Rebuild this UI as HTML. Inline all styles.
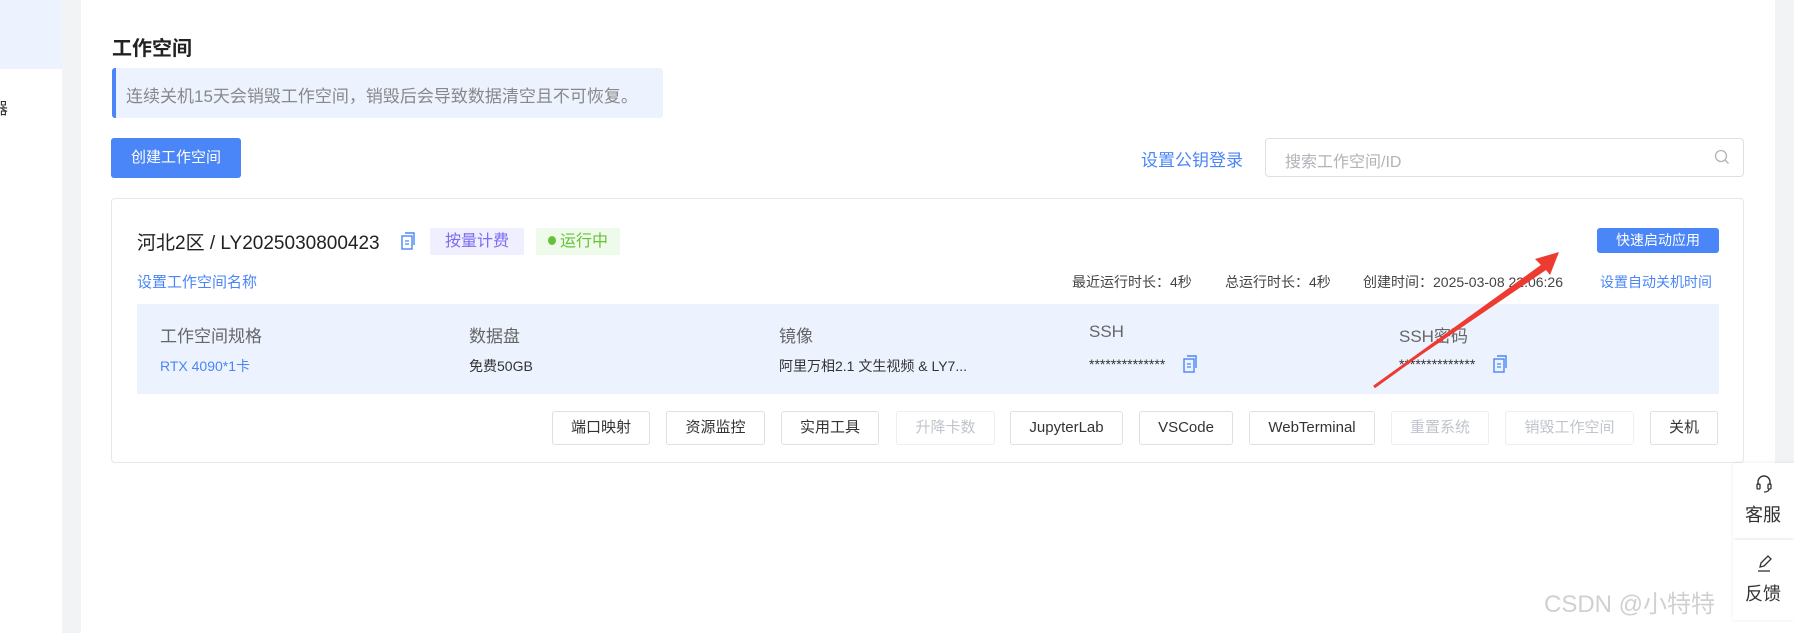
<!DOCTYPE html>
<html><head><meta charset="utf-8"><style>
*{margin:0;padding:0;box-sizing:border-box}
body{width:1794px;height:633px;overflow:hidden;background:#fff;font-family:"Liberation Sans","Noto Sans CJK SC",sans-serif;color:#333;position:relative}
.a{position:absolute;white-space:nowrap}
.btn{position:absolute;top:411px;height:34px;border:1px solid #dcdfe6;border-radius:3px;font-size:15px;line-height:32px;text-align:center;color:#333;background:#fff}
.dis{color:#c0c4cc;border-color:#ebeef5}
.lbl{position:absolute;top:322px;font-size:17px;color:#666}
.val{position:absolute;top:356px;font-size:14px;color:#333}
</style></head><body>
<div class="a" style="left:0;top:0;width:62px;height:633px;background:#fff"></div>
<div class="a" style="left:0;top:0;width:62px;height:69px;background:#edf3fe"></div>
<div class="a" style="left:-8px;top:95px;font-size:16px;color:#333">器</div>
<div class="a" style="left:62px;top:0;width:19px;height:633px;background:#f2f3f5"></div>
<div class="a" style="left:1775px;top:0;width:19px;height:463px;background:#f2f3f5"></div>

<div class="a" style="left:112px;top:32px;font-size:20px;font-weight:bold;color:#222">工作空间</div>
<div class="a" style="left:112px;top:68px;width:551px;height:50px;background:#edf3fe;border-left:4px solid #4a86f7;border-radius:3px"></div>
<div class="a" style="left:126px;top:82px;font-size:17px;color:#888">连续关机15天会销毁工作空间，销毁后会导致数据清空且不可恢复。</div>
<div class="a" style="left:111px;top:138px;width:130px;height:40px;background:#4a86f7;border-radius:3px;color:#fff;font-size:15px;line-height:40px;text-align:center">创建工作空间</div>

<div class="a" style="left:1141px;top:146px;font-size:17px;color:#4a86f7">设置公钥登录</div>
<div class="a" style="left:1265px;top:138px;width:479px;height:39px;border:1px solid #dcdfe6;border-radius:4px"></div>
<div class="a" style="left:1285px;top:148px;font-size:16px;color:#b0b3b8">搜索工作空间/ID</div>
<svg class="a" style="left:1714px;top:149px" width="16" height="16" viewBox="0 0 16 16"><circle cx="7" cy="7" r="5.5" fill="none" stroke="#b0b3b8" stroke-width="1.3"/><path d="M11 11l3.5 3.5" stroke="#b0b3b8" stroke-width="1.3"/></svg>

<div class="a" style="left:111px;top:198px;width:1633px;height:265px;border:1px solid #e4e7ed;border-radius:4px"></div>
<div class="a" style="left:137px;top:228px;font-size:19px;color:#222">河北2区 / LY2025030800423</div>
<svg class="a" style="left:400px;top:232px" width="17" height="18" viewBox="0 0 17 18"><rect x="2" y="4" width="10" height="13" fill="none" stroke="#4a86f7" stroke-width="1.4"/><path d="M5 1h9v12" fill="none" stroke="#4a86f7" stroke-width="1.4"/><path d="M5 9h4M5 12h4" stroke="#4a86f7" stroke-width="1.3"/></svg>
<div class="a" style="left:430px;top:228px;width:94px;height:27px;background:#efefff;border-radius:2px;color:#7b6cf0;font-size:16px;line-height:27px;text-align:center">按量计费</div>
<div class="a" style="left:536px;top:228px;width:84px;height:27px;background:#eefaea;border-radius:2px;color:#67c23a;font-size:16px;line-height:27px;text-align:center"><span style="display:inline-block;width:8px;height:9px;border-radius:50%;background:#67c23a;margin-right:4px;vertical-align:1px"></span>运行中</div>
<div class="a" style="left:137px;top:271px;font-size:15px;color:#4a86f7">设置工作空间名称</div>

<div class="a" style="left:1597px;top:228px;width:122px;height:25px;background:#4a86f7;border-radius:3px;color:#fff;font-size:14px;line-height:25px;text-align:center">快速启动应用</div>
<div class="a" style="left:1072px;top:272px;font-size:14px;color:#444">最近运行时长：4秒</div>
<div class="a" style="left:1225px;top:272px;font-size:14px;color:#444">总运行时长：4秒</div>
<div class="a" style="left:1363px;top:272px;font-size:14px;color:#444">创建时间：2025-03-08 22:06:26</div>
<div class="a" style="left:1600px;top:272px;font-size:14px;color:#4a86f7">设置自动关机时间</div>

<div class="a" style="left:137px;top:304px;width:1582px;height:90px;background:#edf3fe"></div>
<div class="lbl" style="left:160px">工作空间规格</div>
<div class="lbl" style="left:469px">数据盘</div>
<div class="lbl" style="left:779px">镜像</div>
<div class="lbl" style="left:1089px">SSH</div>
<div class="lbl" style="left:1399px">SSH密码</div>
<div class="val" style="left:160px;color:#4a86f7">RTX 4090*1卡</div>
<div class="val" style="left:469px">免费50GB</div>
<div class="val" style="left:779px">阿里万相2.1 文生视频 &amp; LY7...</div>
<div class="val" style="left:1089px">**************</div>
<div class="val" style="left:1399px">**************</div>
<svg class="a" style="left:1183px;top:355px" width="15" height="18" viewBox="0 0 15 18"><rect x="1" y="4" width="10" height="13" fill="none" stroke="#4a86f7" stroke-width="1.4"/><path d="M4 1h9v12" fill="none" stroke="#4a86f7" stroke-width="1.4"/><path d="M4 9h4M4 12h4" stroke="#4a86f7" stroke-width="1.3"/></svg>
<svg class="a" style="left:1493px;top:355px" width="15" height="18" viewBox="0 0 15 18"><rect x="1" y="4" width="10" height="13" fill="none" stroke="#4a86f7" stroke-width="1.4"/><path d="M4 1h9v12" fill="none" stroke="#4a86f7" stroke-width="1.4"/><path d="M4 9h4M4 12h4" stroke="#4a86f7" stroke-width="1.3"/></svg>

<div class="btn" style="left:552px;width:98px">端口映射</div>
<div class="btn" style="left:666px;width:99px">资源监控</div>
<div class="btn" style="left:781px;width:98px">实用工具</div>
<div class="btn dis" style="left:896px;width:99px">升降卡数</div>
<div class="btn" style="left:1010px;width:113px">JupyterLab</div>
<div class="btn" style="left:1139px;width:94px">VSCode</div>
<div class="btn" style="left:1249px;width:126px">WebTerminal</div>
<div class="btn dis" style="left:1391px;width:98px">重置系统</div>
<div class="btn dis" style="left:1505px;width:129px">销毁工作空间</div>
<div class="btn" style="left:1650px;width:68px">关机</div>

<div class="a" style="left:1733px;top:463px;width:61px;height:75px;background:#fff;box-shadow:0 0 4px rgba(0,0,0,.08)"></div>
<div class="a" style="left:1733px;top:540px;width:61px;height:80px;background:#fff;box-shadow:0 0 4px rgba(0,0,0,.08)"></div>
<svg class="a" style="left:1755px;top:474px" width="18" height="20" viewBox="0 0 18 20"><path d="M3 11V8a6 6 0 0 1 12 0v3" fill="none" stroke="#333" stroke-width="1.4"/><rect x="2" y="10" width="3" height="5" rx="1" fill="none" stroke="#333" stroke-width="1.3"/><rect x="13" y="10" width="3" height="5" rx="1" fill="none" stroke="#333" stroke-width="1.3"/><path d="M14 15q0 3-5 3" fill="none" stroke="#333" stroke-width="1.3"/></svg>
<div class="a" style="left:1745px;top:501px;font-size:18px;color:#333">客服</div>
<svg class="a" style="left:1755px;top:553px" width="18" height="20" viewBox="0 0 18 20"><path d="M5 14l1-4 7-7 3 3-7 7z" fill="none" stroke="#333" stroke-width="1.3"/><path d="M3 18h12" stroke="#333" stroke-width="1.3"/></svg>
<div class="a" style="left:1745px;top:580px;font-size:18px;color:#333">反馈</div>
<div class="a" style="left:1544px;top:584px;font-size:24px;color:rgba(150,150,150,.45)">CSDN @小特特</div>

<svg class="a" style="left:0;top:0" width="1794" height="633"><path d="M1374 387L1542 266L1535 259L1559 252L1550 275L1546 270Z" fill="#ee3b32"/><path d="M1374 387L1542 266" stroke="#ee3b32" stroke-width="3"/></svg>
</body></html>
